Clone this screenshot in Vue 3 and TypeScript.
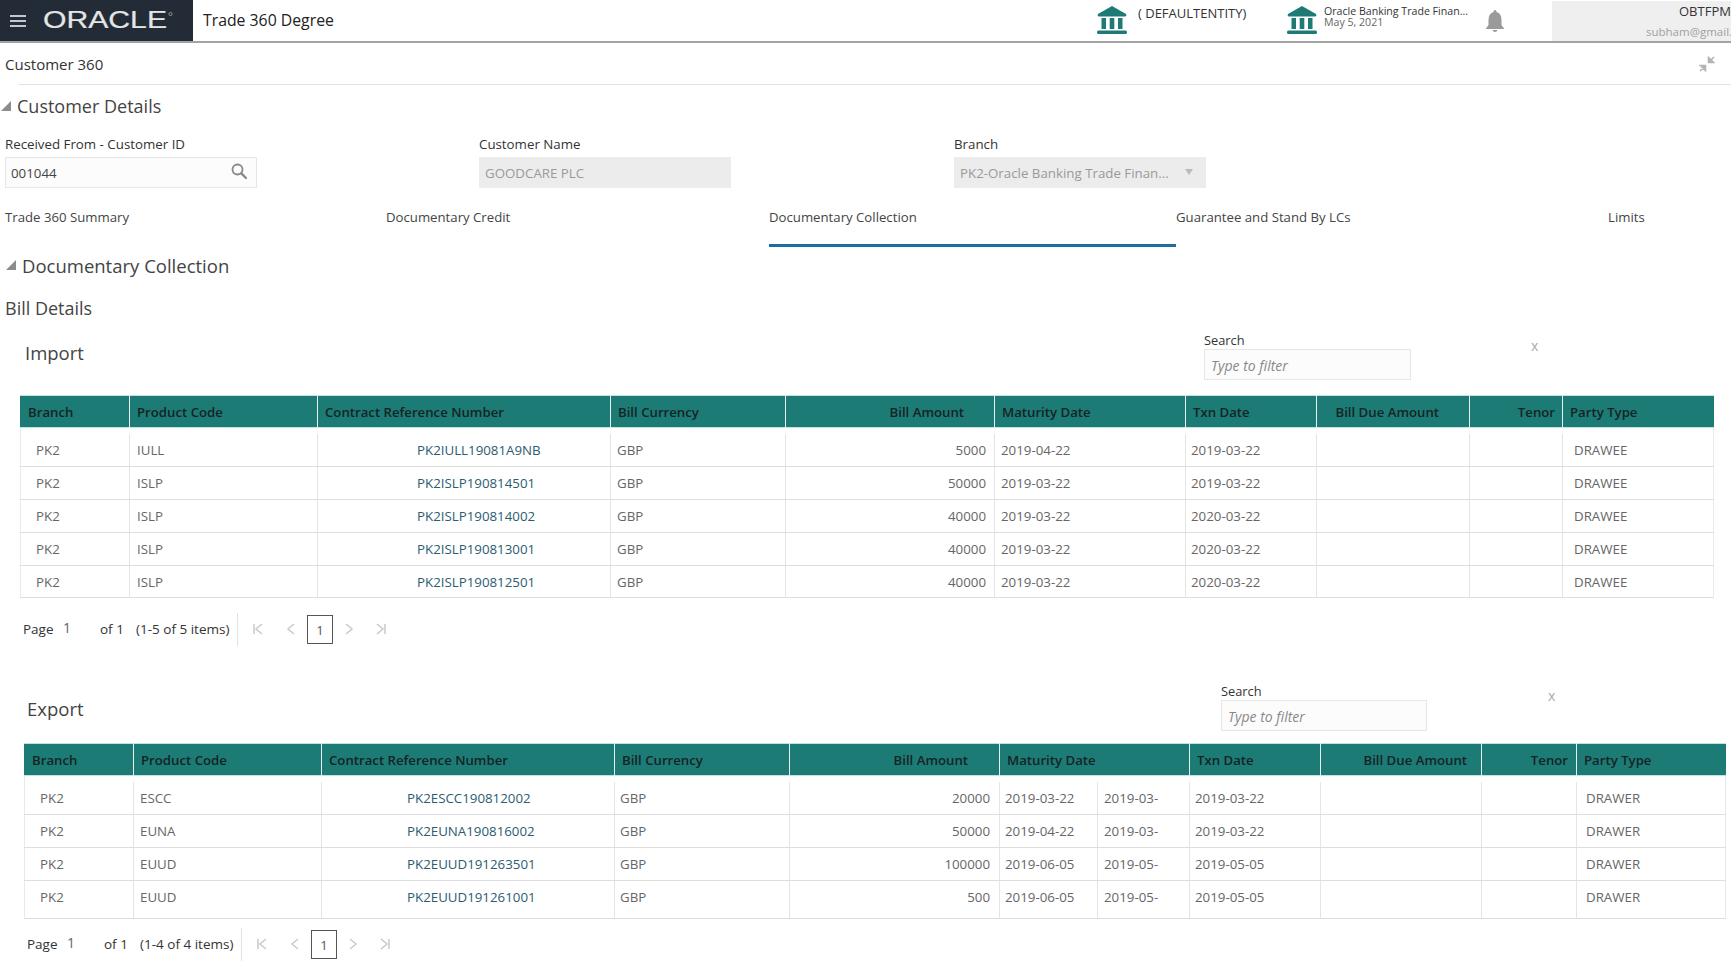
<script setup lang="ts">
interface Row { code: string; ref: string; amount: string; maturity: string; value?: string; txn: string }
interface TableData { cls: string; title: string; party: string; total: string; rows: Row[] }

const headers = ['Branch', 'Product Code', 'Contract Reference Number', 'Bill Currency', 'Bill Amount', 'Maturity Date', 'Txn Date', 'Bill Due Amount', 'Tenor', 'Party Type']

const tables: TableData[] = [
  {
    cls: 'import', title: 'Import', party: 'DRAWEE', total: '(1-5 of 5 items)',
    rows: [
      { code: 'IULL', ref: 'PK2IULL19081A9NB', amount: '5000', maturity: '2019-04-22', txn: '2019-03-22' },
      { code: 'ISLP', ref: 'PK2ISLP190814501', amount: '50000', maturity: '2019-03-22', txn: '2019-03-22' },
      { code: 'ISLP', ref: 'PK2ISLP190814002', amount: '40000', maturity: '2019-03-22', txn: '2020-03-22' },
      { code: 'ISLP', ref: 'PK2ISLP190813001', amount: '40000', maturity: '2019-03-22', txn: '2020-03-22' },
      { code: 'ISLP', ref: 'PK2ISLP190812501', amount: '40000', maturity: '2019-03-22', txn: '2020-03-22' }
    ]
  },
  {
    cls: 'export', title: 'Export', party: 'DRAWER', total: '(1-4 of 4 items)',
    rows: [
      { code: 'ESCC', ref: 'PK2ESCC190812002', amount: '20000', maturity: '2019-03-22', value: '2019-03-22', txn: '2019-03-22' },
      { code: 'EUNA', ref: 'PK2EUNA190816002', amount: '50000', maturity: '2019-04-22', value: '2019-03-22', txn: '2019-03-22' },
      { code: 'EUUD', ref: 'PK2EUUD191263501', amount: '100000', maturity: '2019-06-05', value: '2019-05-05', txn: '2019-05-05' },
      { code: 'EUUD', ref: 'PK2EUUD191261001', amount: '500', maturity: '2019-06-05', value: '2019-05-05', txn: '2019-05-05' }
    ]
  }
]

const tabs = ['Trade 360 Summary', 'Documentary Credit', 'Documentary Collection', 'Guarantee and Stand By LCs', 'Limits']
</script>

<template>
  <div class="page">
    <header class="topbar">
      <div class="brand">
        <span class="burger"><i></i><i></i><i></i></span>
        <svg class="logo" viewBox="0 0 130 20" width="130" height="20">
          <text x="0" y="17" textLength="124" lengthAdjust="spacingAndGlyphs" class="logo-text">ORACLE</text>
          <circle cx="127.5" cy="3" r="1.6" fill="none" stroke="#ccc" stroke-width="0.6" />
        </svg>
      </div>
      <div class="app-name">Trade 360 Degree</div>
      <div class="entity entity-a">
        <svg class="bank" viewBox="0 0 30 28" width="30" height="28"><path d="M15 0 L29 8 Q30 10 28 10.500 H2 Q0 10 1 8 Z M4.500 12 H9 V23 H4.500 Z M12.700 12 H17.300 V23 H12.700 Z M21 12 H25.500 V23 H21 Z M1.500 24.500 H28.500 Q30 24.500 30 26 V26.500 Q30 28 28.500 28 H1.500 Q0 28 0 26.500 V26 Q0 24.500 1.500 24.500 Z" /></svg>
        <span class="entity-name">( DEFAULTENTITY)</span>
      </div>
      <div class="entity entity-b">
        <svg class="bank" viewBox="0 0 30 28" width="30" height="28"><path d="M15 0 L29 8 Q30 10 28 10.500 H2 Q0 10 1 8 Z M4.500 12 H9 V23 H4.500 Z M12.700 12 H17.300 V23 H12.700 Z M21 12 H25.500 V23 H21 Z M1.500 24.500 H28.500 Q30 24.500 30 26 V26.500 Q30 28 28.500 28 H1.500 Q0 28 0 26.500 V26 Q0 24.500 1.500 24.500 Z" /></svg>
        <div class="bank-text"><div>Oracle Banking Trade Finan...</div><div class="bank-date">May 5, 2021</div></div>
      </div>
      <svg class="bell" viewBox="0 0 18 22" width="18" height="22"><path d="M9 0 Q10.500 0 10.500 2 Q15.500 3.500 15.500 10 V15 L18 18.500 V19 H0 V18.500 L2.500 15 V10 Q2.500 3.500 7.500 2 Q7.500 0 9 0 Z M6.500 20 H11.500 Q11 22 9 22 Q7 22 6.500 20 Z" /></svg>
      <div class="user"><div class="user-name">OBTFPM</div><div class="user-mail">subham@gmail.com</div></div>
    </header>

    <div class="title-bar">
      <span>Customer 360</span>
      <svg class="compress" viewBox="0 0 16 16" width="16" height="16"><path d="M15 1 L10.500 5.500 M9.500 1.500 V6.500 H14.500 Z M1 15 L5.500 10.500 M1.500 9.500 H6.500 V14.500 Z" stroke="#b4b4b4" stroke-width="1.600" fill="#b4b4b4" /></svg>
    </div>
    <div class="rule"></div>

    <div class="heading customer-heading"><i class="tri"></i><span>Customer Details</span></div>
    <div class="fields">
      <div class="field">
        <label>Received From - Customer ID</label>
        <div class="box"><span>001044</span>
          <svg class="search-icon" viewBox="0 0 16 16" width="16" height="16"><circle cx="6.500" cy="6.500" r="5" fill="none" stroke="#888" stroke-width="1.800" /><path d="M10.300 10.300 L15 15" stroke="#888" stroke-width="2.400" stroke-linecap="round" /></svg>
        </div>
      </div>
      <div class="field">
        <label>Customer Name</label>
        <div class="box disabled"><span>GOODCARE PLC</span></div>
      </div>
      <div class="field">
        <label>Branch</label>
        <div class="box disabled"><span>PK2-Oracle Banking Trade Finan...</span><i class="caret"></i></div>
      </div>
    </div>

    <nav class="tabs">
      <div v-for="(t, i) in tabs" :key="t" class="tab" :class="{ active: i === 2 }">{{ t }}</div>
    </nav>

    <div class="heading collection-heading"><i class="tri"></i><span>Documentary Collection</span></div>
    <div class="bill-title">Bill Details</div>

    <section v-for="t in tables" :key="t.cls" class="block" :class="t.cls">
      <div class="block-head">
        <h3>{{ t.title }}</h3>
        <div class="search">
          <label>Search</label>
          <input type="text" placeholder="Type to filter" />
        </div>
        <span class="clear">x</span>
      </div>
      <div class="grid head-row">
        <div v-for="h in headers" :key="h" class="hcell">{{ h }}</div>
      </div>
      <div v-for="(r, ri) in t.rows" :key="r.ref" class="grid row" :class="{ first: ri === 0, last: ri === t.rows.length - 1 }">
        <div class="cell c-branch">PK2</div>
        <div class="cell c-code">{{ r.code }}</div>
        <div class="cell c-ref">{{ r.ref }}</div>
        <div class="cell c-cur">GBP</div>
        <div class="cell c-amt">{{ r.amount }}</div>
        <div class="cell c-mat" :class="{ split: r.value }">
          <span>{{ r.maturity }}</span>
          <span v-if="r.value" class="clip"><em>{{ r.value }}</em></span>
        </div>
        <div class="cell c-txn">{{ r.txn }}</div>
        <div class="cell"></div>
        <div class="cell"></div>
        <div class="cell c-party">{{ t.party }}</div>
      </div>
      <div class="pager">
        <span class="p-word">Page</span>
        <span class="p-num">1</span>
        <span class="p-of">of 1</span>
        <span class="p-total">{{ t.total }}</span>
        <i class="p-div"></i>
        <svg class="p-icon first-icon" viewBox="0 0 12 14" width="12" height="14"><path d="M2 2 V12 M10 2 L4 7 L10 12" /></svg>
        <svg class="p-icon prev-icon" viewBox="0 0 12 14" width="12" height="14"><path d="M9 2 L3 7 L9 12" /></svg>
        <span class="p-box">1</span>
        <svg class="p-icon next-icon" viewBox="0 0 12 14" width="12" height="14"><path d="M3 2 L9 7 L3 12" /></svg>
        <svg class="p-icon last-icon" viewBox="0 0 12 14" width="12" height="14"><path d="M10 2 V12 M2 2 L8 7 L2 12" /></svg>
      </div>
    </section>
  </div>
</template>

<style>
html, body { margin: 0; background: #fff; overflow: hidden; }
</style>

<style scoped>
.page {
  width: 1731px;
  height: 962px;
  overflow: hidden;
  font-family: "Open Sans", "Noto Sans", sans-serif;
  font-size: 13.300px;
  color: #333;
  background: #fff;
}
.topbar {
  display: flex;
  height: 41px;
  border-bottom: 2px solid #a3a3a3;
  position: relative;
}
.brand {
  width: 193px;
  flex: none;
  background: #222b36;
  display: flex;
  align-items: center;
  padding-left: 10px;
  box-sizing: border-box;
}
.burger { display: flex; flex-direction: column; gap: 3px; width: 16px; }
.burger i { display: block; height: 2px; background: #c4c7cb; }
.logo { margin-left: 17px; }
.logo-text { font-family: "Liberation Sans", sans-serif; font-size: 23px; fill: #e4e5e7; stroke: #e4e5e7; stroke-width: 0.2; }
.app-name { width: 270px; flex: none; padding-left: 10px; font-size: 15.800px; line-height: 40px; color: #222; }
.entity { display: flex; flex: none; }
.bank { fill: #1d7a74; flex: none; margin-top: 6px; }
.entity-a { margin-left: 624px; width: 190px; }
.entity-name { margin-left: 11px; line-height: 26px; font-size: 13px; color: #333; white-space: nowrap; }
.entity-b { width: 199px; }
.bank-text { margin-left: 7px; font-size: 10.600px; line-height: 11px; padding-top: 6px; color: #333; white-space: nowrap; }
.bank-date { color: #666; }
.bell { fill: #9a9a9a; margin-top: 10px; flex: none; }
.user {
  margin: 1px 0 0 48px;
  flex: 1;
  min-width: 0;
  background: #efefef;
  position: relative;
  overflow: hidden;
}
.user-name { position: absolute; left: 127px; top: 0; font-size: 13px; line-height: 20px; white-space: nowrap; }
.user-mail { position: absolute; left: 94px; top: 22px; font-size: 11.500px; line-height: 18px; color: #a0a0a0; white-space: nowrap; }
.title-bar {
  height: 41px;
  padding: 0 16px 0 5px;
  display: flex;
  align-items: center;
  justify-content: space-between;
  font-size: 15px;
  color: #333;
}
.compress { margin-top: 1px; }
.rule { height: 1px; margin-left: 18px; background: #e2e2e2; }
.heading { display: flex; align-items: center; color: #444; font-size: 18px; }
.tri { display: block; width: 10px; height: 10px; background: #8c8c8c; clip-path: polygon(100% 0, 100% 100%, 0 100%); flex: none; }
.customer-heading { height: 42px; padding-left: 1px; gap: 6px; }
.fields { display: grid; grid-template-columns: 474px 475px 1fr; padding-left: 5px; padding-top: 7px; }
.field label { display: block; height: 23px; line-height: 21px; color: #333; font-size: 13.300px; }
.box {
  width: 252px;
  height: 31px;
  box-sizing: border-box;
  border: 1px solid #e6e6e6;
  background: #fcfcfd;
  display: flex;
  align-items: center;
  justify-content: space-between;
  padding: 0 9px 0 5px;
  font-size: 13.300px;
  color: #444;
}
.box.disabled { background: #ececec; border-color: #ececec; color: #9a9a9a; padding-right: 12px; }
.search-icon { margin-top: -4px; }
.caret { width: 0; height: 0; border: 4.500px solid transparent; border-top: 6px solid #bbb; border-bottom: 0; margin-top: -2px; }
.tabs { display: grid; grid-template-columns: 381px 383px 407px 432px 1fr; padding-left: 5px; margin-top: 15px; height: 43px; }
.tab { padding-top: 5px; line-height: 18px; font-size: 13.200px; color: #444; white-space: nowrap; }
.tab.active { border-bottom: 3px solid #1a6f9c; box-sizing: border-box; height: 44px; }
.collection-heading { height: 40px; padding: 0 0 2px 6px; box-sizing: border-box; gap: 6px; font-size: 18.500px; }
.bill-title { height: 44px; line-height: 44px; padding-left: 5px; font-size: 18px; color: #444; }
.block-head { display: grid; align-items: start; height: 65px; }
.block h3 { margin: 0; font-weight: 400; font-size: 18.500px; line-height: 26px; color: #444; }
.search label { display: block; height: 18px; line-height: 19px; font-size: 12.800px; color: #333; }
.search input {
  display: block;
  width: 100%;
  height: 31px;
  box-sizing: border-box;
  border: 1px solid #e6e6e6;
  background: #fcfcfd;
  padding: 1px 6px 0;
  font: italic 14px "Open Sans", sans-serif;
  outline: none;
}
.search input::placeholder { color: #888; opacity: 1; }
.clear { color: #aaa; font-size: 14px; line-height: 14px; }
.import { margin-left: 20px; width: 1694px; }
.export { margin-left: 24px; width: 1702px; margin-top: 33px; }
.import .block-head { grid-template-columns: 1184px 207px 1fr; }
.export .block-head { grid-template-columns: 1197px 206px 1fr; }
.import h3 { padding: 10px 0 0 5px; }
.export h3 { padding: 18px 0 0 3px; }
.import .search { padding-top: 1px; }
.export .search { padding-top: 4px; }
.import .clear { margin: 9px 0 0 120px; }
.export .clear { margin: 11px 0 0 121px; }
.grid { display: grid; }
.import .grid { grid-template-columns: 109px 188px 293px 175px 209px 191px 131px 153px 93px 152px; }
.export .grid { grid-template-columns: 109px 188px 293px 175px 210px 190px 131px 161px 95px 150px; }
.head-row {
  height: 33px;
  background: #1d7b76;
  box-shadow: inset 0 1px 0 #bfe3df, inset 0 -1px 0 #bfe3df;
}
.hcell {
  line-height: 34px;
  padding-left: 7px;
  font-size: 13.200px;
  font-weight: 600;
  color: #142425;
  white-space: nowrap;
  border-left: 1px solid #e7f1f0;
}
.hcell:first-child { border-left: 0; padding-left: 8px; }
.hcell:nth-child(5), .hcell:nth-child(8), .hcell:nth-child(9) { text-align: right; padding-left: 0; }
.import .hcell:nth-child(5), .import .hcell:nth-child(8) { padding-right: 30px; }
.import .hcell:nth-child(9) { padding-right: 7px; }
.export .hcell:nth-child(5) { padding-right: 31px; }
.export .hcell:nth-child(8) { padding-right: 14px; }
.export .hcell:nth-child(9) { padding-right: 8px; }
.row {
  height: 33px;
  box-sizing: border-box;
  border-bottom: 1px solid #dedede;
  box-shadow: inset 1px 0 #eaeaea, inset -1px 0 #eaeaea;
}
.row.first { height: 39px; padding-top: 6px; }
.import .row.last { height: 32px; }
.export .row.last { height: 38px; }
.cell {
  line-height: 33px;
  font-size: 13.300px;
  color: #666;
  border-left: 1px solid #e4e4e4;
  white-space: nowrap;
  overflow: hidden;
  padding-left: 5px;
}
.cell:first-child { border-left: 0; padding-left: 16px; }
.c-ref { color: #2b5c70; }
.import .c-ref { padding-left: 99px; }
.export .c-ref { padding-left: 85px; }
.c-amt { text-align: right; padding: 0 8px 0 0; }
.export .c-amt { padding-right: 9px; }
.import .c-party { padding-left: 11px; }
.export .c-party { padding-left: 9px; }
.import .c-code { padding-left: 7px; }
.export .c-code { padding-left: 6px; }
.import .c-cur { padding-left: 6px; }
.export .c-cur { padding-left: 5px; }
.import .c-mat { padding-left: 6px; }
.export .c-txn { padding-left: 5px; }
.c-mat.split { display: flex; padding-left: 0; }
.c-mat.split span { width: 97px; padding-left: 5px; box-sizing: border-box; flex: none; }
.c-mat.split .clip { width: 91px; border-left: 1px solid #e4e4e4; padding-left: 6px; }
.clip em { display: block; width: 54px; overflow: hidden; font-style: normal; }
.pager { display: flex; align-items: center; height: 47px; padding-top: 15px; box-sizing: border-box; color: #333; font-size: 13.500px; }
.export .pager { padding-top: 9px; height: 41px; }
.p-word { margin-left: 3px; width: 40px; }
.p-num { width: 37px; margin-top: -4px; color: #666; font-size: 14px; }
.p-of { width: 36px; }
.p-total { width: 101px; white-space: nowrap; }
.p-div { width: 1px; height: 33px; background: #e2e2e2; }
.p-icon { fill: none; stroke: #c9c9c9; stroke-width: 1.500; flex: none; }
.first-icon { margin-left: 14px; }
.prev-icon { margin-left: 21px; }
.p-box {
  width: 26px;
  height: 29px;
  box-sizing: border-box;
  margin-left: 10px;
  border: 1px solid #555;
  text-align: center;
  line-height: 28px;
  color: #555;
  font-size: 13px;
}
.next-icon { margin-left: 10px; }
.last-icon { margin-left: 20px; }
</style>
